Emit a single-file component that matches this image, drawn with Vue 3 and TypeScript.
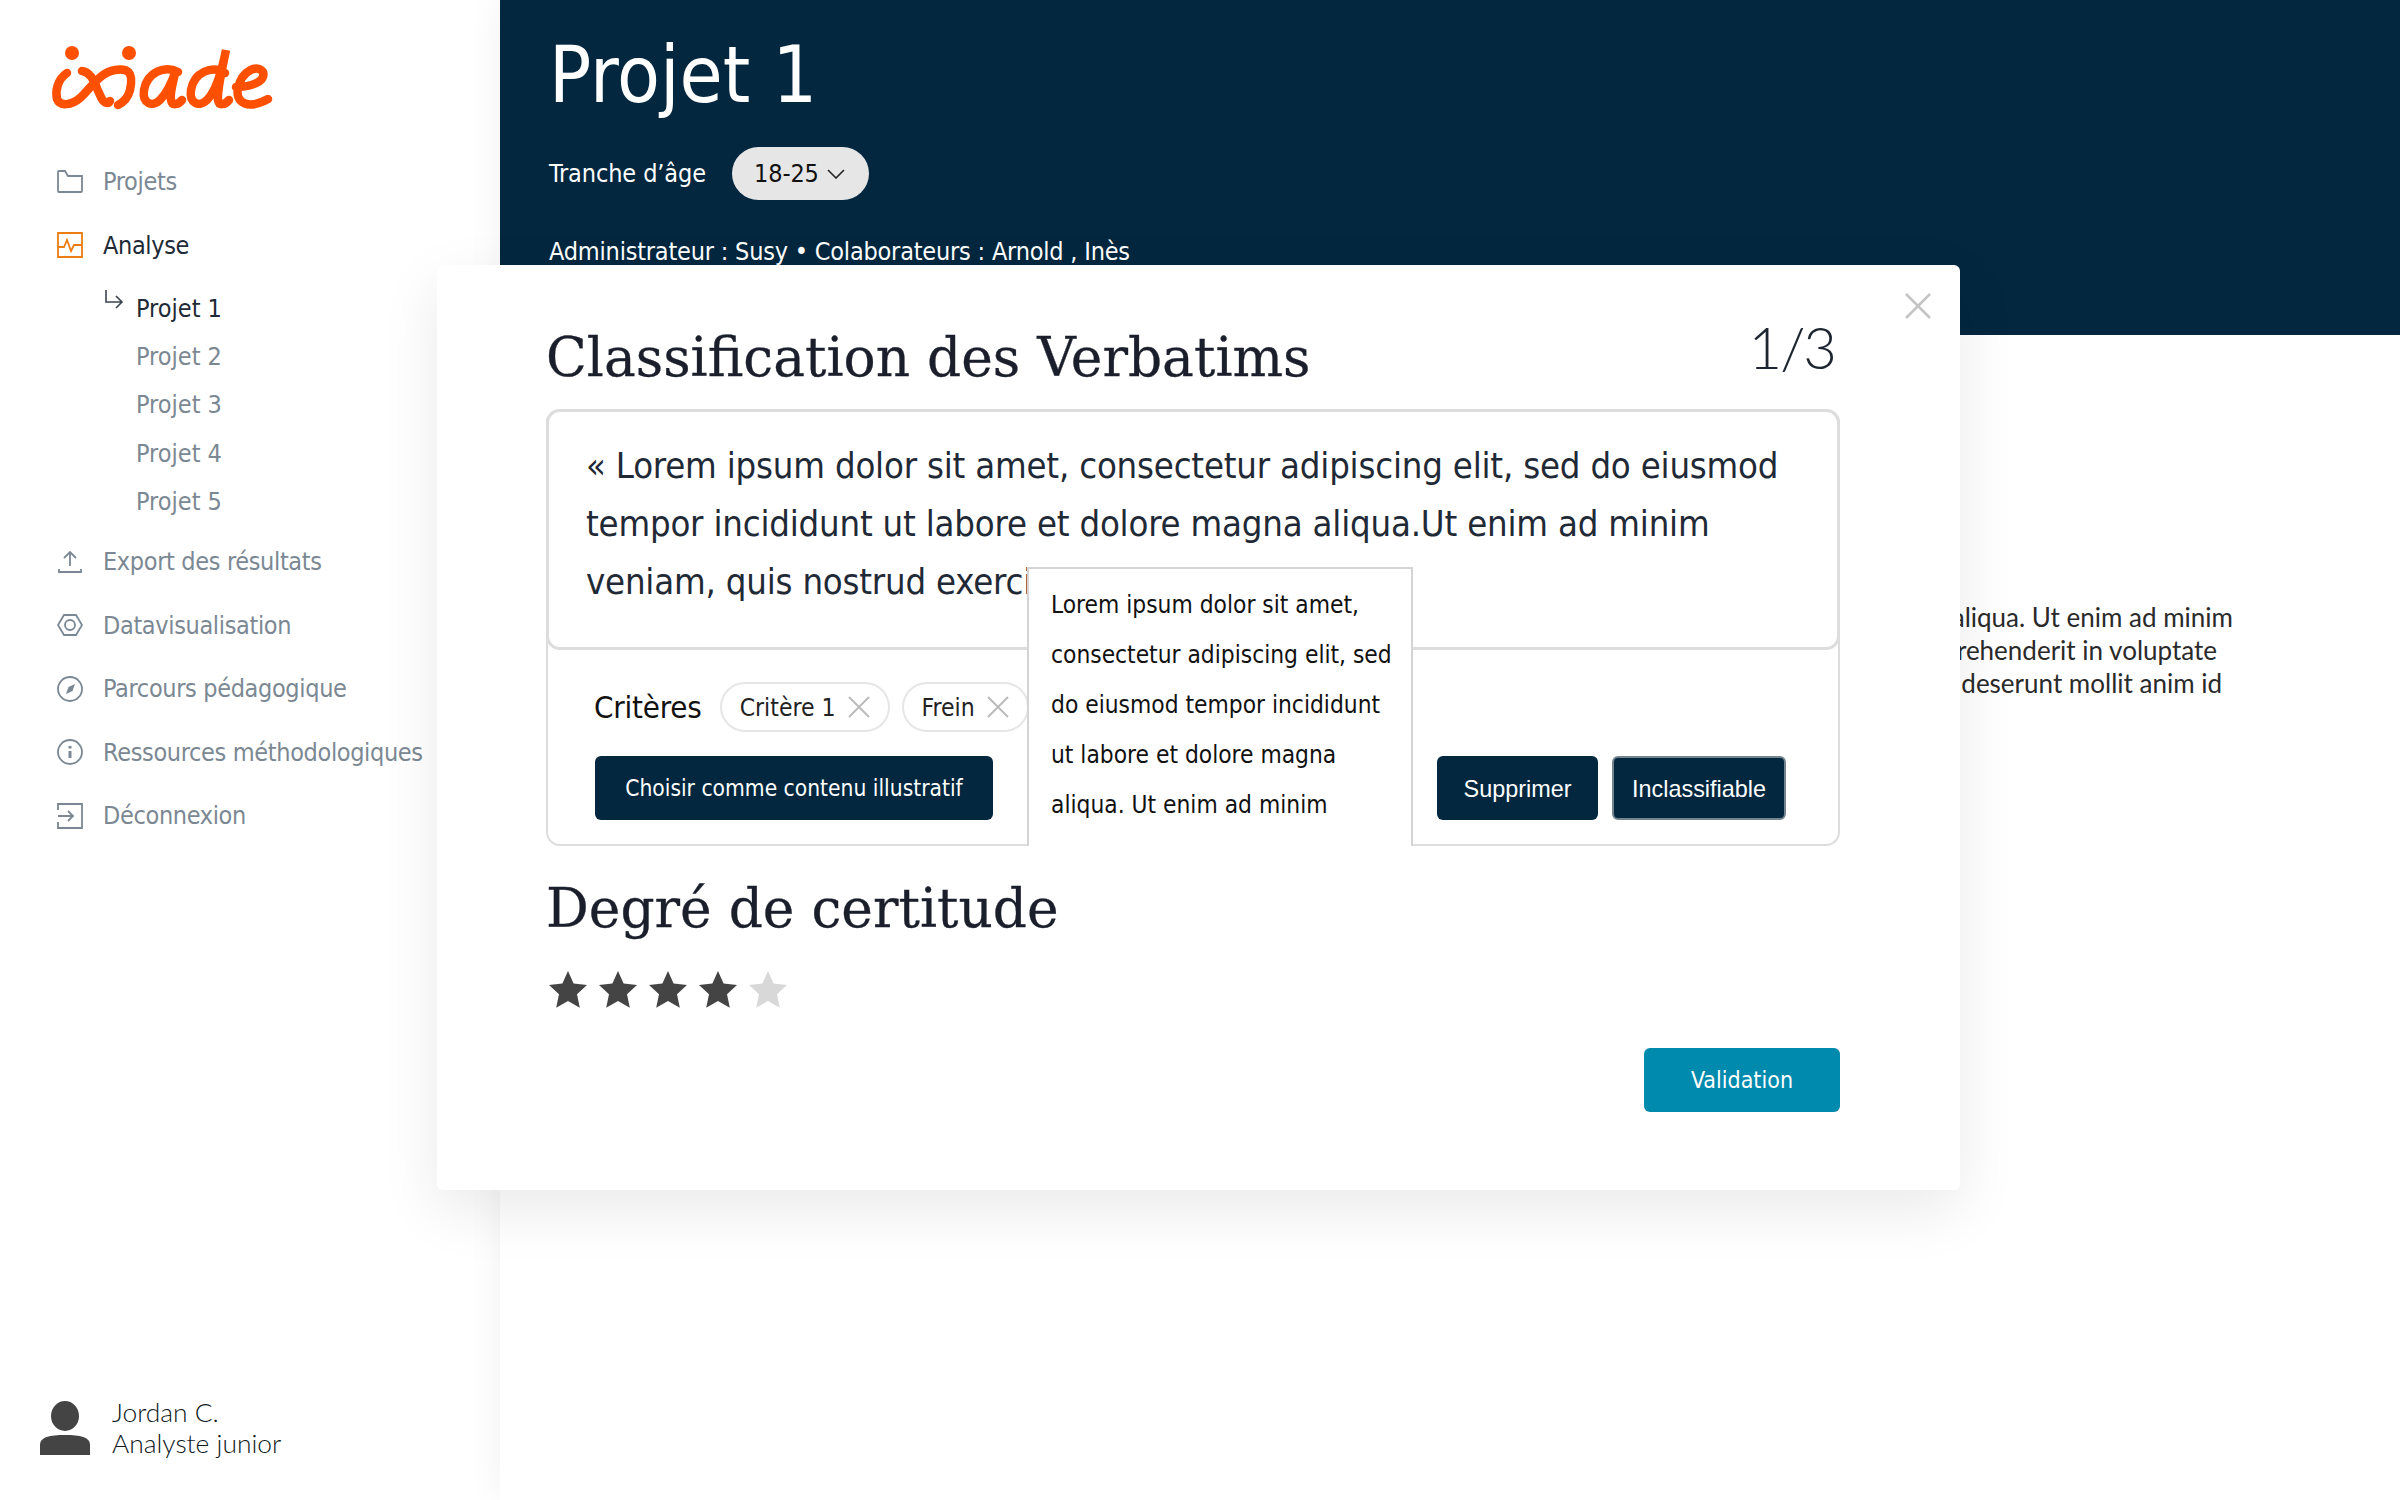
<script setup lang="ts">
const subItems = ['Projet 2', 'Projet 3', 'Projet 4', 'Projet 5']
const stars = [true, true, true, true, false]
const starPath = 'M19 0l5.6 12.6 13.4 1.4-10 9.2 2.8 13.6L19 30l-11.8 6.8L10 23.200 0 14l13.400-1.400z'
</script>

<template>
  <div class="page">
    <aside class="sidebar">
      <svg class="logo" viewBox="0 0 240 80" width="240" height="80">
        <g fill="#ff5000"><circle cx="22" cy="13" r="7" /><circle cx="79" cy="13" r="7" /></g>
        <g fill="none" stroke="#ff5000" stroke-width="8.500" stroke-linecap="round">
          <path d="M17 33C8 39 5 50 7 59C10 67 22 65 30 58C40 49 50 32 65 30C78 28 84 32 80 50C78 58 72 63 68 65" />
          <path d="M32 31C42 32 45 45 50 55C53 63 58 65 60 61" />
          <path d="M128 32C115 25 97 32 94 50C92 63 102 68 110 60C117 53 122 42 126 30C122 45 120 55 121 60C122 66 128 65 132 60" />
          <path d="M175 33C162 25 144 32 141 50C139 63 149 68 157 60C167 50 173 25 176 10C172 30 167 50 168 60C169 66 175 65 179 60" />
          <path d="M186 47C200 47 216 42 213 32C208 24 192 30 188 48C185 63 198 70 218 59" />
        </g>
      </svg>

      <nav class="menu">
        <a class="item">
          <svg class="ic" viewBox="0 0 26 24"><path d="M1 3v18a1 1 0 0 0 1 1h22a1 1 0 0 0 1-1V6H11L8 1H2a1 1 0 0 0-1 1z" /></svg>
          Projets
        </a>
        <a class="item active">
          <svg class="ic orange" viewBox="0 0 26 26"><path d="M1 1h24v24H1zM1 15h6l3-7 4 11 3-6h8" /></svg>
          Analyse
        </a>
        <div class="sub">
          <a class="subitem current">
            <svg class="arrow" viewBox="0 0 20 20"><path d="M2 1v12h16M12 7l6 6-6 6" /></svg>
            Projet 1
          </a>
          <a v-for="s in subItems" :key="s" class="subitem">{{ s }}</a>
        </div>
        <a class="item">
          <svg class="ic" viewBox="0 0 26 24"><path d="M13 16V2M7 8l6-6 6 6M2 19v3h22v-3" /></svg>
          Export des résultats
        </a>
        <a class="item">
          <svg class="ic" viewBox="0 0 26 24"><path d="M7 2h12l6 10-6 10H7L1 12z" /><circle cx="13" cy="12" r="5" /></svg>
          Datavisualisation
        </a>
        <a class="item">
          <svg class="ic" viewBox="0 0 26 26"><circle cx="13" cy="13" r="12" /><path class="solid" d="M18 8l-2.500 7L9 18l2.500-7z" /></svg>
          Parcours pédagogique
        </a>
        <a class="item">
          <svg class="ic" viewBox="0 0 26 26"><circle cx="13" cy="13" r="12" /><path d="M13 12v7M13 7v2.500" stroke-width="3" /></svg>
          Ressources méthodologiques
        </a>
        <a class="item">
          <svg class="ic" viewBox="0 0 26 26"><path d="M1 7V1h24v24H1v-6M1 13h15M11 8l5 5-5 5" /></svg>
          Déconnexion
        </a>
      </nav>

      <div class="user">
        <svg class="avatar" viewBox="0 0 50 54" width="50" height="54">
          <ellipse cx="25" cy="15" rx="14" ry="15" fill="#444" />
          <path d="M0 54V44c0-8 10-10 25-10s25 2 25 10v10z" fill="#444" />
        </svg>
        <div class="user-text">
          <div>Jordan C.</div>
          <div>Analyste junior</div>
        </div>
      </div>
    </aside>

    <main class="main">
      <header class="banner">
        <h1>Projet 1</h1>
        <div class="age">
          <span>Tranche d’âge</span>
          <span class="pill">18-25
            <svg viewBox="0 0 18 10" width="18" height="10"><path d="M1 1l8 8 8-8" fill="none" stroke="#222" stroke-width="1.600" /></svg>
          </span>
        </div>
        <p class="people">Administrateur : Susy • Colaborateurs : Arnold , Inès</p>
      </header>
      <div class="para">
        <div>aliqua. Ut enim ad minim</div>
        <div>rehenderit in voluptate</div>
        <div>deserunt mollit anim id</div>
      </div>
    </main>

    <section class="modal">
      <svg class="close" viewBox="0 0 26 26" width="26" height="26"><path d="M1 1l24 24M25 1L1 25" fill="none" stroke="#c4c4c4" stroke-width="2.500" /></svg>
      <div class="modal-head">
        <h2>Classification des Verbatims</h2>
        <span class="count">1/3</span>
      </div>

      <div class="box">
        <div class="quote">
          « Lorem ipsum dolor sit amet, consectetur adipiscing elit, sed do eiusmod tempor incididunt ut labore et dolore magna aliqua.Ut enim ad minim veniam, quis nostrud exerci
        </div>
        <div class="box-body">
          <div class="criteria">
            <span class="crit-label">Critères</span>
            <span class="chip">Critère 1
              <svg viewBox="0 0 22 22" width="22" height="22"><path d="M1 1l20 20M21 1L1 21" /></svg>
            </span>
            <span class="chip">Frein
              <svg viewBox="0 0 22 22" width="22" height="22"><path d="M1 1l20 20M21 1L1 21" /></svg>
            </span>
          </div>
          <div class="actions">
            <button class="btn wide">Choisir comme contenu illustratif</button>
            <div class="actions-right">
              <button class="btn arial del">Supprimer</button>
              <button class="btn arial unclass">Inclassifiable</button>
            </div>
          </div>
        </div>
        <div class="tooltip">
          Lorem ipsum dolor sit amet, consectetur adipiscing elit, sed do eiusmod tempor incididunt ut labore et dolore magna aliqua. Ut enim ad minim
        </div>
      </div>

      <h2 class="degree">Degré de certitude</h2>
      <div class="stars">
        <svg v-for="(on, i) in stars" :key="i" viewBox="0 0 38 37" width="38" height="37">
          <path :d="starPath" :fill="on ? '#444' : '#d8d8d8'" />
        </svg>
      </div>
      <div class="foot">
        <button class="validate">Validation</button>
      </div>
    </section>
  </div>
</template>

<style>
html, body { margin: 0; background: #fff; }
</style>

<style scoped>
.page {
  position: relative;
  display: flex;
  width: 2400px;
  height: 1500px;
  overflow: hidden;
  font-family: "DejaVu Sans Condensed", "DejaVu Sans", sans-serif;
}
.sidebar {
  width: 500px;
  height: 1500px;
  box-sizing: border-box;
  padding: 40px 0 0 50px;
  display: flex;
  flex-direction: column;
  background: #fff;
}
.logo { display: block; margin-bottom: 30px; }
.menu { display: flex; flex-direction: column; }
.item {
  display: flex;
  align-items: center;
  height: 63.400px;
  font-size: 25px;
  letter-spacing: -0.35px;
  color: #7b8893;
  gap: 20px;
  margin-left: 7px;
}
.item.active { color: #1e2a36; }
.ic {
  width: 26px;
  height: 26px;
  flex: none;
  fill: none;
  stroke: #7b8893;
  stroke-width: 1.800;
}
.ic.orange { stroke: #ee7d11; }
.ic .solid { fill: #7b8893; stroke: none; }
.sub { display: flex; flex-direction: column; margin: 8px 0 4px 86px; }
.subitem {
  position: relative;
  height: 48.300px;
  line-height: 48.300px;
  font-size: 25px;
  color: #7b8893;
}
.subitem.current { color: #1e2a36; }
.arrow {
  position: absolute;
  left: -32px;
  top: 4px;
  width: 20px;
  height: 20px;
  fill: none;
  stroke: #3a4450;
  stroke-width: 1.600;
}
.user {
  margin-top: auto;
  margin-bottom: 41px;
  margin-left: -10px;
  display: flex;
  align-items: center;
  gap: 22px;
}
.user-text {
  font-family: Lato, sans-serif;
  font-size: 26.400px;
  font-weight: 300;
  line-height: 31px;
  color: #101820;
}
.main {
  flex: 1;
  position: relative;
  background: #fff;
  box-shadow: 0 0 34px rgba(0, 0, 0, 0.06);
}
.banner {
  height: 335px;
  box-sizing: border-box;
  padding: 31px 49px;
  background: #02273f;
  color: #fff;
}
.banner h1 {
  margin: 0;
  font-size: 78px;
  font-weight: 400;
  line-height: 88px;
}
.age {
  display: flex;
  align-items: center;
  gap: 26px;
  margin-top: 28px;
  font-size: 25px;
  letter-spacing: -0.1px;
}
.pill {
  display: flex;
  align-items: center;
  gap: 8px;
  height: 53px;
  padding: 0 24px 0 22px;
  border-radius: 27px;
  background: #e6e6e6;
  color: #111;
}
.people { margin: 36px 0 0; font-size: 25px; letter-spacing: -0.2px; line-height: 32px; }
.para {
  margin-top: 266px;
  margin-right: 167px;
  font-family: Lato, sans-serif;
  font-size: 26px;
  line-height: 33px;
  color: #2a2a2a;
  text-align: right;
  white-space: nowrap;
}
.para div:nth-child(2) { margin-right: 16px; }
.para div:nth-child(3) { margin-right: 11px; }
.modal {
  position: absolute;
  left: 437px;
  top: 265px;
  width: 1523px;
  height: 925px;
  box-sizing: border-box;
  padding: 0 120px 0 109px;
  background: #fff;
  border-radius: 6px;
  box-shadow: 0 20px 60px rgba(0, 0, 0, 0.085);
  color: #1d2530;
}
.close { position: absolute; right: 29px; top: 28px; }
.modal-head {
  display: flex;
  justify-content: space-between;
  align-items: flex-end;
  height: 144px;
  box-sizing: border-box;
  padding: 0 5px 16px 0;
}
h2 {
  margin: 0;
  font-family: "DejaVu Serif", serif;
  font-size: 53.400px;
  font-weight: 400;
  line-height: 70px;
  color: #1a1f2b;
  -webkit-text-stroke: 0.3px #1a1f2b;
}
.count {
  font-family: Lato, sans-serif;
  font-size: 58px;
  line-height: 72px;
  font-weight: 300;
  letter-spacing: -2px;
  margin-bottom: 10px;
}
.box {
  position: relative;
  height: 437px;
  box-sizing: border-box;
  border: 2px solid #ddd;
  border-top: 0;
  border-radius: 14px;
}
.quote {
  height: 241px;
  box-sizing: border-box;
  margin: 0 -2px;
  padding: 25px 30px 0 37px;
  border: 3px solid #ddd;
  border-radius: 14px;
  font-size: 36.200px;
  letter-spacing: -0.2px;
  line-height: 58px;
  color: #1f2a36;
}
.box-body { padding: 32px 0 0 46px; }
.criteria { display: flex; align-items: center; gap: 12px; height: 50px; }
.crit-label { font-size: 31px; letter-spacing: -0.2px; margin-right: 6px; color: #111; }
.chip {
  display: flex;
  align-items: center;
  gap: 12px;
  height: 50px;
  box-sizing: border-box;
  padding: 0 18px;
  border: 2px solid #e6e6e6;
  border-radius: 25px;
  font-size: 24.500px;
  color: #222;
}
.chip svg { fill: none; stroke: #bbb; stroke-width: 2; }
.actions {
  display: flex;
  justify-content: space-between;
  align-items: center;
  margin-top: 24px;
  padding-right: 52px;
}
.actions-right { display: flex; gap: 14px; }
.btn {
  height: 64px;
  border: 0;
  border-radius: 6px;
  background: #02273f;
  color: #fff;
  font-family: inherit;
  font-size: 22.600px;
  padding: 0;
}
.wide { width: 398px; margin-left: 1px; }
.arial { font-family: "Liberation Sans", sans-serif; font-size: 23.400px; padding-top: 2px; }
.del { width: 161px; }
.unclass { width: 174px; border: 2px solid #75858f; }
.tooltip {
  position: absolute;
  left: 479px;
  top: 158px;
  width: 386px;
  height: 279px;
  box-sizing: border-box;
  padding: 11px 4px 0 22px;
  background: #fff;
  border: 2px solid #d4d4d4;
  border-bottom: 0;
  font-size: 24.300px;
  line-height: 50px;
  color: #111;
}
.degree { margin-top: 28px; }
.stars { display: flex; gap: 12px; margin: 27px 0 0 3px; }
.foot { display: flex; justify-content: flex-end; margin-top: 40px; padding-right: 0; }
.validate {
  width: 196px;
  height: 64px;
  border: 0;
  border-radius: 6px;
  background: #008aad;
  color: #fff;
  font-family: "DejaVu Sans Condensed", "DejaVu Sans", sans-serif;
  font-size: 23px;
}
</style>
